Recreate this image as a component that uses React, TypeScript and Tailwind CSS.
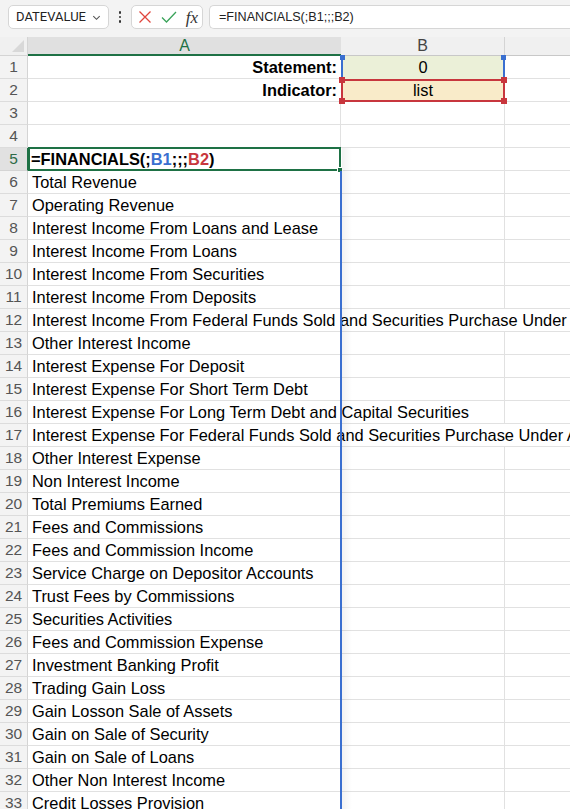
import React from "react";

const rows: string[] = [
  "Total Revenue",
  "Operating Revenue",
  "Interest Income From Loans and Lease",
  "Interest Income From Loans",
  "Interest Income From Securities",
  "Interest Income From Deposits",
  "Interest Income From Federal Funds Sold and Securities Purchase Under Agreements to Resell",
  "Other Interest Income",
  "Interest Expense For Deposit",
  "Interest Expense For Short Term Debt",
  "Interest Expense For Long Term Debt and Capital Securities",
  "Interest Expense For Federal Funds Sold and Securities Purchase Under Agreements to Resell",
  "Other Interest Expense",
  "Non Interest Income",
  "Total Premiums Earned",
  "Fees and Commissions",
  "Fees and Commission Income",
  "Service Charge on Depositor Accounts",
  "Trust Fees by Commissions",
  "Securities Activities",
  "Fees and Commission Expense",
  "Investment Banking Profit",
  "Trading Gain Loss",
  "Gain Losson Sale of Assets",
  "Gain on Sale of Security",
  "Gain on Sale of Loans",
  "Other Non Interest Income",
  "Credit Losses Provision",
];

// rows whose text runs past column B
const longRows = [12, 17];

const RowHead = ({ n, active }: { n: number; active?: boolean }) => (
  <div
    className={
      "w-[28px] shrink-0 flex items-center justify-center border-r border-b text-[15.5px] " +
      (active
        ? "bg-[#e1e1e1] text-[#2f6b47] border-r-[#1e7145] border-b-[#d4d4d4]"
        : "bg-[#f3f3f3] text-[#555] border-r-[#d4d4d4] border-b-[#dcdcdc]")
    }
  >
    {n}
  </div>
);

const Toolbar = () => (
  <div className="h-[37px] bg-[#f3f3f3] flex items-start pt-[5px] pl-[8px]">
    {/* Name box */}
    <div className="w-[101px] h-[24px] bg-white border border-[#d6d6d6] rounded-[5px] flex items-center justify-between pl-[7px] pr-[6px] text-[13px] text-[#222] font-['Roboto',sans-serif]">
      <span>DATEVALUE</span>
      <svg width="11" height="11" viewBox="0 0 12 12" fill="none" stroke="#555" strokeWidth="1.2">
        <path d="M2.5 4.5 L6 8 L9.5 4.5" />
      </svg>
    </div>
    {/* ellipsis */}
    <div className="w-[22px] h-[24px] flex flex-col items-center justify-center gap-[2px]">
      <span className="w-[2.5px] h-[2.5px] rounded-full bg-[#333]"></span>
      <span className="w-[2.5px] h-[2.5px] rounded-full bg-[#333]"></span>
      <span className="w-[2.5px] h-[2.5px] rounded-full bg-[#333]"></span>
    </div>
    {/* cancel / enter / fx */}
    <div className="w-[72px] h-[24px] bg-white border border-[#d6d6d6] rounded-[5px] flex items-center justify-between pl-[6px] pr-[4px]">
      <svg width="14" height="14" viewBox="0 0 14 14" fill="none" stroke="#e0453d" strokeWidth="1.3">
        <path d="M1.5 1.5 L12.5 12.5 M12.5 1.5 L1.5 12.5" />
      </svg>
      <svg width="16" height="14" viewBox="0 0 16 14" fill="none" stroke="#3aa35a" strokeWidth="1.3">
        <path d="M1 7.5 L5.5 12 L15 2" />
      </svg>
      <span className="text-[17px] italic text-[#333] font-['Liberation_Serif',serif] leading-none">fx</span>
    </div>
    {/* formula input */}
    <div className="ml-[6px] flex-1 h-[24px] bg-white border border-[#d6d6d6] border-r-0 rounded-l-[5px] flex items-center pl-[9px] text-[12.6px] text-[#222]">
      =FINANCIALS(;B1;;;B2)
    </div>
  </div>
);

const HeaderRow = () => (
  <div className="h-[19px] flex bg-[#f0f0f0] text-[16px]">
    <div className="w-[28px] shrink-0 relative border-r border-[#d4d4d4] border-b border-b-[#d4d4d4]">
      <svg className="absolute right-[3px] bottom-[3px]" width="12" height="12" viewBox="0 0 12 12">
        <path d="M12 0 L12 12 L0 12 Z" fill="#d8d8d8" />
      </svg>
    </div>
    <div className="w-[313px] shrink-0 bg-[#e0e0e0] border-b-2 border-[#1e7145] flex items-center justify-center text-[#1e7145]">
      A
    </div>
    <div className="w-[164px] shrink-0 border-r border-[#d4d4d4] border-b border-b-[#c8c8c8] flex items-center justify-center text-[#444]">
      B
    </div>
    <div className="flex-1 border-b border-[#c8c8c8]"></div>
  </div>
);

export default function App() {
  return (
    <div className="w-[570px] h-[809px] overflow-hidden bg-white font-['Liberation_Sans',Arial,sans-serif] text-black relative">
      <Toolbar />
      <HeaderRow />

      <div className="relative">
        {/* Row 1 */}
        <div className="h-[23px] flex text-[16.4px]">
          <RowHead n={1} />
          <div className="w-[313px] shrink-0 border-b border-[#e1e1e1] flex items-center justify-end pr-[4px] font-bold">
            Statement:
          </div>
          <div className="w-[164px] shrink-0 bg-[#ebf0d8] border-x-2 border-[#3a6fd0] flex items-center justify-center relative">
            0
            <span className="absolute -left-[3px] -top-[1px] w-[5px] h-[5px] bg-[#3a6fd0]"></span>
            <span className="absolute -right-[3px] -top-[1px] w-[5px] h-[5px] bg-[#3a6fd0]"></span>
          </div>
          <div className="flex-1 border-b border-[#e1e1e1]"></div>
        </div>
        {/* Row 2 */}
        <div className="h-[23px] flex text-[16.4px]">
          <RowHead n={2} />
          <div className="w-[313px] shrink-0 border-b border-[#e1e1e1] flex items-center justify-end pr-[4px] font-bold">
            Indicator:
          </div>
          <div className="w-[164px] shrink-0 bg-[#f9ebc9] border-2 border-[#c8363d] flex items-center justify-center relative">
            list
            <span className="absolute -left-[4px] -top-[4px] w-[6px] h-[6px] bg-[#c8363d]"></span>
            <span className="absolute -right-[4px] -top-[4px] w-[6px] h-[6px] bg-[#c8363d]"></span>
            <span className="absolute -left-[4px] -bottom-[4px] w-[6px] h-[6px] bg-[#c8363d]"></span>
            <span className="absolute -right-[4px] -bottom-[4px] w-[6px] h-[6px] bg-[#c8363d]"></span>
          </div>
          <div className="flex-1 border-b border-[#e1e1e1]"></div>
        </div>
        {/* Rows 3-4 */}
        {[3, 4].map((n) => (
          <div key={n} className="h-[23px] flex">
            <RowHead n={n} />
            <div className="w-[313px] shrink-0 border-b border-r border-[#e1e1e1]"></div>
            <div className="w-[164px] shrink-0 border-b border-r border-[#e1e1e1]"></div>
            <div className="flex-1 border-b border-[#e1e1e1]"></div>
          </div>
        ))}
        {/* Row 5: active cell */}
        <div className="h-[23px] flex text-[16.4px]">
          <RowHead n={5} active />
          <div className="w-[313px] shrink-0 -mt-px h-[24px] border-2 border-[#1e7145] flex items-center pl-[1px] font-bold relative">
            <span>
              =FINANCIALS(;<span className="text-[#3a6fd0]">B1</span>;;;<span className="text-[#c8363d]">B2</span>)
            </span>
            <span className="absolute -right-[4px] -bottom-[4px] w-[6px] h-[6px] bg-[#1e7145] border border-white"></span>
          </div>
          <div className="w-[164px] shrink-0 border-b border-r border-[#e1e1e1]"></div>
          <div className="flex-1 border-b border-[#e1e1e1]"></div>
        </div>
        {/* Data rows */}
        {rows.map((label, i) => {
          const n = i + 6;
          const long = longRows.includes(n);
          return (
            <div key={n} className="h-[23px] flex text-[16.4px]">
              <RowHead n={n} />
              <div className="w-[313px] shrink-0 border-b border-[#e1e1e1] flex items-center pl-[4px] whitespace-nowrap overflow-visible relative z-10">
                {label}
              </div>
              <div
                className={
                  "w-[164px] shrink-0 border-b border-[#e1e1e1] " +
                  (long ? "" : "border-r")
                }
              ></div>
              <div className="flex-1 border-b border-[#e1e1e1]"></div>
            </div>
          );
        })}

        {/* frozen column shadow */}
        <div className="absolute left-[342px] top-[92px] bottom-0 w-[10px] bg-gradient-to-r from-[#0000000d] to-transparent pointer-events-none z-20"></div>
        {/* reference line down column B's left edge */}
        <div className="absolute left-[340px] top-[115px] bottom-0 w-[1.5px] bg-[#3a6fd0] z-20"></div>
      </div>
    </div>
  );
}
